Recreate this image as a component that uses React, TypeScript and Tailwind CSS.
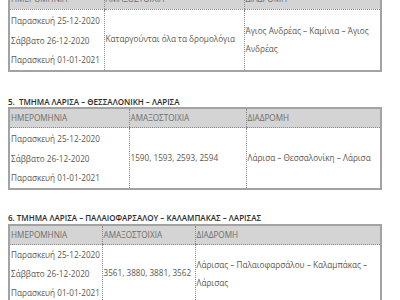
const rows = ['Παρασκευή 25-12-2020', 'Σάββατο 26-12-2020', 'Παρασκευή 01-01-2021'];

type Section = {
  title?: string;
  trains: string;
  route: string;
  cols: [string, string, string];
  dates: string;
};

const sections: Section[] = [
  {
    trains: 'Καταργούνται όλα τα δρομολόγια',
    route: 'Άγιος Ανδρέας – Καμίνια – Άγιος Ανδρέας',
    cols: ['w-[95px]', 'w-[140px]', 'w-[137px]'],
    dates: 'pt-[1.5px] leading-[19.5px]',
  },
  {
    title: '5.  ΤΜΗΜΑ ΛΑΡΙΣΑ – ΘΕΣΣΑΛΟΝΙΚΗ – ΛΑΡΙΣΑ',
    trains: '1590, 1593, 2593, 2594',
    route: 'Λάρισα – Θεσσαλονίκη – Λάρισα',
    cols: ['w-[120px]', 'w-[117px]', 'w-[135px]'],
    dates: 'pt-[1px] leading-[19.5px]',
  },
  {
    title: '6. ΤΜΗΜΑ ΛΑΡΙΣΑ – ΠΑΛΑΙΟΦΑΡΣΑΛΟΥ – ΚΑΛΑΜΠΑΚΑΣ – ΛΑΡΙΣΑΣ',
    trains: '3561, 3880, 3881, 3562',
    route: 'Λάρισας – Παλαιοφαρσάλου – Καλαμπάκας – Λάρισας',
    cols: ['w-[93px]', 'w-[93px]', 'w-[186px]'],
    dates: 'pt-0 leading-[19px]',
  },
];

function Schedule({ s }: { s: Section }) {
  return (
    <table className="w-[372px] table-fixed border-collapse border-2 border-[#a3a3a3] text-[8.2px]">
      <colgroup>
        <col className={s.cols[0]} />
        <col className={s.cols[1]} />
        <col className={s.cols[2]} />
      </colgroup>
      <thead>
        <tr className="bg-[#d4d4d4] text-[#6e6e6e] h-[20px]">
          <th className="text-left font-normal px-px border-b border-dotted border-[#8a8a8a]">ΗΜΕΡΟΜΗΝΙΑ</th>
          <th className="text-left font-normal px-px border-b border-l border-dotted border-[#8a8a8a]">ΑΜΑΞΟΣΤΟΙΧΙΑ</th>
          <th className="text-left font-normal px-px border-b border-l border-dotted border-[#8a8a8a]">ΔΙΑΔΡΟΜΗ</th>
        </tr>
      </thead>
      <tbody className="text-[#5e574d]">
        <tr>
          <td className={`px-px pb-0 align-top whitespace-nowrap ${s.dates}`}>
            {rows.map((r) => (
              <div key={r}>{r}</div>
            ))}
          </td>
          <td className="px-px border-l border-dotted border-[#8a8a8a] align-middle whitespace-nowrap">{s.trains}</td>
          <td className="pl-px pr-1 border-l border-dotted border-[#8a8a8a] align-middle leading-[18px]">{s.route}</td>
        </tr>
      </tbody>
    </table>
  );
}

export default function App() {
  return (
    <div className="w-[400px] h-[300px] overflow-hidden bg-white px-2 font-['Open_Sans',sans-serif]">
      <div className="-mt-[12px]">
        <Schedule s={sections[0]} />
      </div>
      <h3 className="mt-[25px] mb-0 text-[8px] leading-[10px] font-semibold text-[#2b2b2b] whitespace-pre">
        {sections[1].title}
      </h3>
      <Schedule s={sections[1]} />
      <h3 className="mt-[23px] mb-px text-[8px] leading-[10px] font-semibold text-[#2b2b2b] whitespace-pre">
        {sections[2].title}
      </h3>
      <Schedule s={sections[2]} />
    </div>
  );
}
